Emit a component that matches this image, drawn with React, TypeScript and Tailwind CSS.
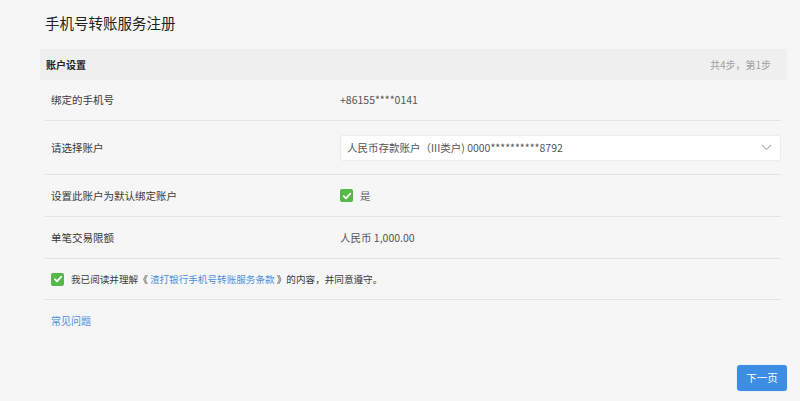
import React from 'react';

const font = { fontFamily: '"Noto Sans CJK SC", "Noto Sans", sans-serif' };

function Check() {
  return (
    <span className="flex h-[13px] w-[13px] items-center justify-center rounded-[2px] bg-[#55b849]">
      <svg width="10" height="10" viewBox="0 0 10 10" fill="none">
        <path d="M1.8 5.2 L4 7.3 L8.3 2.7" stroke="#fff" strokeWidth="1.8" strokeLinecap="round" strokeLinejoin="round" />
      </svg>
    </span>
  );
}

function Row({ label, h, children }: { label: string; h: string; children: React.ReactNode }) {
  return (
    <div className={`flex items-center border-b border-[#e3e3e3] ${h}`}>
      <div className="w-[295px] pl-[6px] text-[10.5px] text-[#3a3a3a]">{label}</div>
      <div className="flex flex-1 items-center text-[10.5px] text-[#555]">{children}</div>
    </div>
  );
}

export default function App() {
  return (
    <div className="min-h-[401px] bg-[#f6f6f6] pl-[40px] pr-[13px]" style={font}>
      <h1 className="flex h-[49px] items-center pb-[4px] pl-[5px] text-[14.5px] font-normal text-[#222]">
        手机号转账服务注册
      </h1>

      <div className="flex h-[31px] items-center justify-between bg-[#efefef] pl-[6px] pr-[16px]">
        <span className="text-[10px] font-bold text-[#222]">账户设置</span>
        <span className="text-[10px] text-[#a0a0a0]">共4步，第1步</span>
      </div>

      <div className="ml-[5px] mr-[6px]">
        <Row label="绑定的手机号" h="h-[41px]">+86155****0141</Row>
        <Row label="请选择账户" h="h-[54px]">
          <div className="flex h-[26px] w-full items-center justify-between rounded-[3px] border border-[#ececec] bg-white pl-[6px] pr-[8px]">
            <span className="text-[#555]">人民币存款账户（III类户) 0000**********8792</span>
            <svg width="11" height="7" viewBox="0 0 11 7" fill="none">
              <path d="M1 1 L5.5 5.5 L10 1" stroke="#b5b5b5" strokeWidth="1.1" />
            </svg>
          </div>
        </Row>
        <Row label="设置此账户为默认绑定账户" h="h-[42px]">
          <Check />
          <span className="ml-[7px] text-[#666]">是</span>
        </Row>
        <Row label="单笔交易限额" h="h-[42px]">人民币 1,000.00</Row>

        <div className="flex h-[41px] items-center border-b border-[#e3e3e3] pl-[6px] text-[9.6px] text-[#3a3a3a]">
          <Check />
          <span className="ml-[7px] whitespace-pre">我已阅读并理解《 </span>
          <span className="text-[#4a90e2]">渣打银行手机号转账服务条款</span>
          <span className="whitespace-pre"> 》的内容，并同意遵守。</span>
        </div>

        <div className="pl-[6px] pt-[13px] text-[10px] text-[#4a90e2]">常见问题</div>
      </div>

      <div className="mt-[37px] flex justify-end">
        <button className="h-[26px] w-[50px] rounded-[3px] bg-[#3d8ee3] text-[10.5px] text-white shadow-[0_0_0_1px_#e6effa]">
          下一页
        </button>
      </div>
    </div>
  );
}
